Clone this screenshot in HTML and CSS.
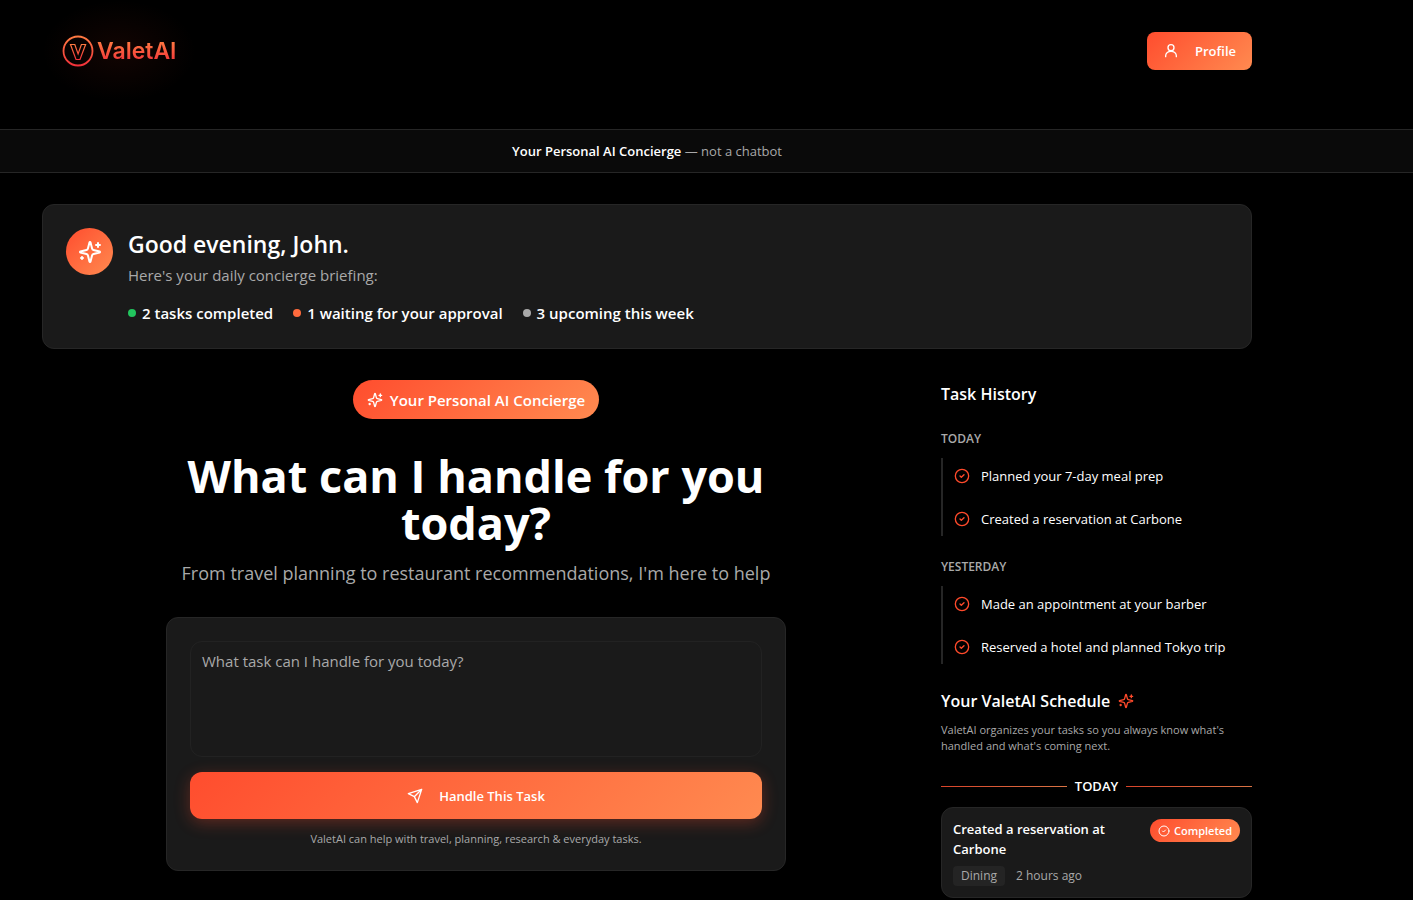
FILE: index.html
```html
<!DOCTYPE html>
<html lang="en">
<head>
<meta charset="utf-8">
<meta name="viewport" content="width=device-width, initial-scale=1">
<title>ValetAI</title>
<link rel="stylesheet" href="styles.css">
</head>
<body>
<svg class="defs" aria-hidden="true">
  <defs>
    <linearGradient id="brand" x1="0" y1="0" x2="0" y2="1">
      <stop offset="0" stop-color="#ff7a42"/><stop offset="1" stop-color="#f2323a"/>
    </linearGradient>
    <symbol id="sparkles" viewBox="0 0 24 24">
      <path d="M9.940 15.500A2 2 0 0 0 8.500 14.060l-6.140-1.580a.5.5 0 0 1 0-.96L8.500 9.940A2 2 0 0 0 9.940 8.500l1.580-6.140a.5.5 0 0 1 .96 0L14.060 8.500A2 2 0 0 0 15.500 9.940l6.140 1.580a.5.5 0 0 1 0 .96L15.500 14.060a2 2 0 0 0-1.440 1.440l-1.580 6.140a.5.5 0 0 1-.96 0z"/>
      <path d="M20 3v4M22 5h-4M4 17v2M5 18H3"/>
    </symbol>
    <symbol id="check" viewBox="0 0 24 24">
      <circle cx="12" cy="12" r="10"/><path d="m9 12 2 2 4-4"/>
    </symbol>
  </defs>
</svg>

<header class="header">
  <a class="logo" href="#" aria-label="ValetAI">
    <svg class="logo-mark" viewBox="0 0 32 32" aria-hidden="true">
      <circle cx="16" cy="16" r="14.500" stroke-width="1.800"/>
      <path d="M8.500 9.500h4.300l3.300 9.500 3.300-9.500h4.200L18 24.500h-4z" stroke-width="1.200"/>
    </svg>
    <span class="logo-text">ValetAI</span>
  </a>
  <button class="profile" type="button">
    <svg class="icon icon-md" viewBox="0 0 24 24" aria-hidden="true"><circle cx="12" cy="7" r="4.500"/><path d="M4 20.500v-1.500a8 6.500 0 0 1 16 0v1.500"/></svg>
    Profile
  </button>
</header>

<div class="banner"><p><strong>Your Personal AI Concierge</strong> — not a chatbot</p></div>

<div class="page">
  <section class="briefing">
    <span class="avatar"><svg class="icon icon-lg" aria-hidden="true"><use href="#sparkles"/></svg></span>
    <div>
      <h2 class="greeting">Good evening, John.</h2>
      <p class="lead">Here's your daily concierge briefing:</p>
      <ul class="stats">
        <li class="done">2 tasks completed</li>
        <li class="waiting">1 waiting for your approval</li>
        <li class="upcoming">3 upcoming this week</li>
      </ul>
    </div>
  </section>

  <div class="columns">
    <main class="hero">
      <span class="pill"><svg class="icon icon-md" aria-hidden="true"><use href="#sparkles"/></svg>Your Personal AI Concierge</span>
      <h1 class="title">What can I handle for you today?</h1>
      <p class="subtitle">From travel planning to restaurant recommendations, I'm here to help</p>
      <form class="task-form">
        <textarea class="task-input" aria-label="Task" placeholder="What task can I handle for you today?"></textarea>
        <button class="submit" type="button">
          <svg class="icon icon-md" viewBox="0 0 24 24" aria-hidden="true"><path d="M22 2 15.500 22 11 13 2 8.500zM22 2 11 13"/></svg>
          Handle This Task
        </button>
        <p class="note">ValetAI can help with travel, planning, research &amp; everyday tasks.</p>
      </form>
    </main>

    <aside class="side">
      <h2 class="side-title">Task History</h2>
      <h3 class="day">TODAY</h3>
      <ul class="history">
        <li><svg class="icon icon-md" aria-hidden="true"><use href="#check"/></svg>Planned your 7-day meal prep</li>
        <li><svg class="icon icon-md" aria-hidden="true"><use href="#check"/></svg>Created a reservation at Carbone</li>
      </ul>
      <h3 class="day">YESTERDAY</h3>
      <ul class="history">
        <li><svg class="icon icon-md" aria-hidden="true"><use href="#check"/></svg>Made an appointment at your barber</li>
        <li><svg class="icon icon-md" aria-hidden="true"><use href="#check"/></svg>Reserved a hotel and planned Tokyo trip</li>
      </ul>
      <h2 class="side-title schedule-title">Your ValetAI Schedule <svg class="icon icon-md" aria-hidden="true"><use href="#sparkles"/></svg></h2>
      <p class="schedule-text">ValetAI organizes your tasks so you always know what's handled and what's coming next.</p>
      <h3 class="divider">TODAY</h3>
      <article class="event">
        <div class="event-head">
          <h4 class="event-title">Created a reservation at Carbone</h4>
          <span class="status"><svg class="icon icon-sm" aria-hidden="true"><use href="#check"/></svg>Completed</span>
        </div>
        <div class="event-meta"><span class="tag">Dining</span><span>2 hours ago</span></div>
      </article>
    </aside>
  </div>
</div>
</body>
</html>
```
FILE: styles.css
```css
:root {
  --grad: linear-gradient(135deg, #ff4d2e, #ff8a50);
  --card: #1a1a1a;
  --line: #262626;
  --muted: #a9a9a9;
  --accent: #ff4a2b;
  --edge-left: 42px;
  --edge-right: 161px;
}
* { box-sizing: border-box; }
body {
  margin: 0;
  background: #000;
  color: #fff;
  font: 13px/20px "Open Sans", "Noto Sans", sans-serif;
}
h1, h2, h3, h4, p, ul { margin: 0; padding: 0; }
ul { list-style: none; }
button { border: 0; color: #fff; font: inherit; font-weight: 600; background: var(--grad); cursor: pointer; }
.defs { display: block; width: 0; height: 0; }
.icon { flex: none; fill: none; stroke: currentColor; stroke-width: 2; stroke-linecap: round; stroke-linejoin: round; }
.icon-sm { width: 12px; height: 12px; }
.icon-md { width: 16px; height: 16px; }
.icon-lg { width: 24px; height: 24px; }

.header {
  display: flex;
  justify-content: space-between;
  align-items: center;
  padding: 0 var(--edge-right) 27px var(--edge-left);
  height: 129px;
}
.logo {
  display: flex;
  align-items: center;
  gap: 3px;
  padding: 35px 20px;
  text-decoration: none;
  background: radial-gradient(closest-side, rgba(255, 60, 30, .07), transparent);
}
.logo-mark { width: 32px; height: 32px; fill: none; stroke: url(#brand); }
.logo-text {
  font: 600 23px/32px Inter, sans-serif;
  color: transparent;
  background: linear-gradient(#ff7a42 20%, #f2323a 85%);
  background-clip: text;
}
.profile {
  display: flex;
  align-items: center;
  gap: 16px;
  height: 38px;
  padding: 0 16px;
  border-radius: 8px;
}
.banner {
  padding: 12px var(--edge-right) 12px var(--edge-left);
  border: solid var(--line);
  border-width: 1px 0;
  background: #0a0a0a;
  text-align: center;
  line-height: 18px;
  color: var(--muted);
}
.banner strong { font-weight: 600; color: #fff; }
.page { padding: 31px var(--edge-right) 3px var(--edge-left); }

.briefing {
  display: flex;
  gap: 15px;
  padding: 23px;
  border: 1px solid var(--line);
  border-radius: 12px;
  background: var(--card);
}
.avatar {
  display: grid;
  place-items: center;
  flex: none;
  width: 47px;
  height: 47px;
  border-radius: 50%;
  background: var(--grad);
}
.greeting { font-size: 23px; line-height: 32px; font-weight: 600; }
.lead { margin-top: 3px; font-size: 15px; line-height: 24px; color: var(--muted); }
.stats { display: flex; flex-wrap: wrap; gap: 8px 20px; margin-top: 14px; font-size: 15px; line-height: 24px; font-weight: 600; }
.stats li { display: flex; align-items: center; gap: 6px; }
.stats li::before { content: ""; width: 8px; height: 8px; border-radius: 50%; background: currentColor; }
.stats .done::before { background: #22c55e; }
.stats .waiting::before { background: #ff6b3d; }
.stats .upcoming::before { background: #a9a9a9; }

.columns { display: grid; grid-template-columns: minmax(0, 1fr) 311px; gap: 31px; margin-top: 31px; }
.hero { display: flex; flex-direction: column; align-items: center; text-align: center; }
.pill {
  display: flex;
  align-items: center;
  gap: 7px;
  height: 39px;
  padding: 0 14px;
  border-radius: 20px;
  background: var(--grad);
  font-size: 15px;
  font-weight: 600;
}
.title { max-width: 620px; margin-top: 33px; font-size: 45px; line-height: 47px; font-weight: 700; }
.subtitle { margin-top: 13px; font-size: 18px; line-height: 28px; color: var(--muted); }
.task-form {
  display: flex;
  flex-direction: column;
  width: 100%;
  max-width: 620px;
  margin-top: 30px;
  padding: 23px;
  border: 1px solid var(--line);
  border-radius: 12px;
  background: var(--card);
}
.task-input {
  height: 116px;
  padding: 7px 11px;
  border: 1px solid #222;
  border-radius: 12px;
  background: transparent;
  color: #fff;
  font: inherit;
  font-size: 15px;
  line-height: 24px;
  resize: none;
}
.task-input::placeholder { color: var(--muted); opacity: 1; }
.submit {
  display: flex;
  justify-content: center;
  align-items: center;
  gap: 16px;
  height: 47px;
  margin-top: 15px;
  border-radius: 12px;
  box-shadow: 0 4px 16px rgba(255, 77, 46, .3);
}
.note { margin-top: 12px; font-size: 11px; line-height: 16px; color: var(--muted); }

.side-title { display: flex; align-items: center; gap: 8px; font-size: 16px; line-height: 28px; font-weight: 600; }
.side-title .icon, .history .icon { color: var(--accent); }
.day { margin: 23px 0 11px; font-size: 12px; line-height: 16px; font-weight: 600; color: var(--muted); }
.history { padding-left: 11px; border-left: 2px solid var(--line); }
.history li { display: flex; align-items: center; gap: 11px; height: 35px; }
.history li + li { margin-top: 8px; }
.schedule-title { margin-top: 23px; }
.schedule-text { margin-top: 7px; font-size: 11px; line-height: 16px; color: var(--muted); }
.divider { display: flex; align-items: center; gap: 8px; margin: 22px 0 11px; line-height: 20px; font-size: 13px; font-weight: 600; }
.divider::before, .divider::after { content: ""; flex: 1; height: 1px; background: linear-gradient(90deg, #d9442a, #d97445); }
.event { padding: 11px; border: 1px solid var(--line); border-radius: 12px; background: var(--card); }
.event-head { display: flex; justify-content: space-between; align-items: flex-start; gap: 12px; }
.event-title { font-size: 13px; line-height: 20px; font-weight: 600; }
.status {
  display: flex;
  align-items: center;
  gap: 4px;
  height: 23px;
  padding: 0 8px;
  border-radius: 12px;
  background: var(--grad);
  font-size: 11px;
  font-weight: 600;
}
.event-meta { display: flex; align-items: center; gap: 11px; margin-top: 7px; font-size: 12px; line-height: 20px; color: var(--muted); }
.tag { padding: 0 8px; border-radius: 4px; background: #242424; }
```
